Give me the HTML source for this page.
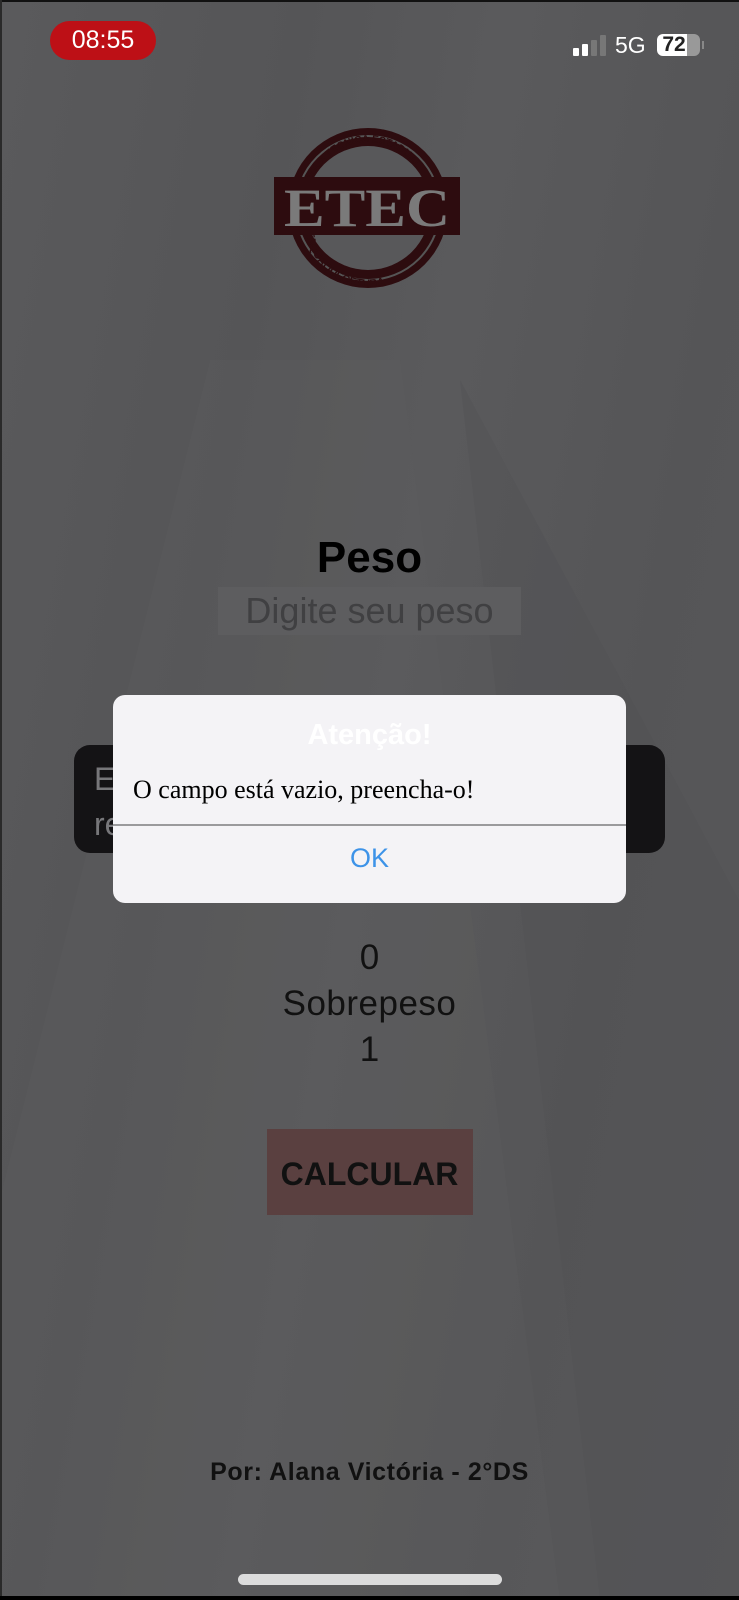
<!DOCTYPE html>
<html><head><meta charset="utf-8"><style>
*{margin:0;padding:0;box-sizing:border-box}
html,body{width:739px;height:1600px;overflow:hidden;background:#58585a;font-family:"Liberation Sans",sans-serif}
.abs{position:absolute}
.c{text-align:center;left:0;width:739px}
</style></head><body>
<div class="abs" style="left:0;top:0;width:739px;height:1600px;background:linear-gradient(100deg,#5a5a5c 0%,#555557 30%,#5a5a5c 50%,#555557 75%,#58585a 100%)"></div>
<svg class="abs" style="left:0;top:0" width="739" height="1600">
<polygon points="210,360 400,360 560,1600 0,1600 0,1200" fill="#5f5f61" opacity="0.25"/>
<polygon points="460,380 739,900 739,1600 600,1600" fill="#505052" opacity="0.3"/>
</svg>
<div class="abs" style="left:0;top:0;width:739px;height:2px;background:#111"></div>
<div class="abs" style="left:0;top:0;width:2px;height:1600px;background:#2a2a2a"></div>
<div class="abs" style="left:0;top:1596px;width:739px;height:4px;background:#000"></div>
<!-- status bar -->
<div class="abs" style="left:50px;top:21px;width:106px;height:39px;border-radius:20px;background:#bd1016;color:#fff;font-size:25px;line-height:39px;text-align:center">08:55</div>
<div class="abs" style="left:573px;top:48px;width:6px;height:8px;background:#fff;border-radius:1px"></div>
<div class="abs" style="left:582px;top:44px;width:6px;height:12px;background:#fff;border-radius:1px"></div>
<div class="abs" style="left:591px;top:40px;width:6px;height:16px;background:#777;border-radius:1px"></div>
<div class="abs" style="left:600px;top:35px;width:6px;height:21px;background:#777;border-radius:1px"></div>
<div class="abs" style="left:615px;top:33px;color:#fff;font-size:23px;line-height:24px">5G</div>
<div class="abs" style="left:657px;top:34px;width:43px;height:22px;border-radius:6px;background:linear-gradient(90deg,#fff 0 70%,#999 70%)"></div>
<div class="abs" style="left:702px;top:41px;width:2px;height:8px;background:#888"></div>
<div class="abs" style="left:657px;top:34px;width:34px;height:22px;color:#222;font-size:21px;font-weight:bold;line-height:22px;text-align:center">72</div>
<!-- logo -->
<svg class="abs" style="left:270px;top:125px" width="200" height="170" viewBox="0 0 200 170">
<defs><path id="ta" d="M40,75 A58,58 0 0 1 156,75"/><path id="tb" d="M36,100 A62,62 0 0 0 160,100"/></defs>
<circle cx="98" cy="83" r="80" fill="#2d0c0f"/>
<circle cx="98" cy="83" r="72" fill="none" stroke="#555" stroke-width="2"/>
<circle cx="98" cy="83" r="62" fill="#58585a"/>
<text font-family="Liberation Sans" font-size="10" font-weight="bold" fill="#2d0c0f"><textPath href="#ta" startOffset="2%">ESCOLA TECNICA ESTADUAL</textPath></text>
<text font-family="Liberation Sans" font-size="11" font-weight="bold" fill="#2d0c0f"><textPath href="#tb" startOffset="2%">ITAQUAQUECETUBA</textPath></text>
<rect x="4" y="52" width="186" height="58" fill="#2d0c0f"/>
<text x="97" y="101" text-anchor="middle" font-family="Liberation Serif" font-size="54" font-weight="bold" fill="#7a7a7a" textLength="166" lengthAdjust="spacingAndGlyphs">ETEC</text>
</svg>
<!-- form -->
<div class="abs c" style="top:532px;font-size:44px;font-weight:bold;color:#000;line-height:52px">Peso</div>
<div class="abs" style="left:218px;top:587px;width:303px;height:48px;background:#5d5d5f"></div>
<div class="abs c" style="top:589px;font-size:36px;color:#404042;line-height:44px">Digite seu peso</div>
<!-- toast -->
<div class="abs" style="left:74px;top:745px;width:591px;height:108px;border-radius:16px;background:#141315;color:#77777a;font-size:32px;line-height:45px;padding:12px 20px">Erro<br>re</div>
<div class="abs" style="left:600px;top:757px;color:#77777a;font-size:32px;line-height:45px">e</div>
<!-- results -->
<div class="abs c" style="top:936px;font-size:35px;color:#111;line-height:44px">0</div>
<div class="abs c" style="top:982px;font-size:35px;color:#111;line-height:44px;letter-spacing:0.5px">Sobrepeso</div>
<div class="abs c" style="top:1028px;font-size:35px;color:#111;line-height:44px">1</div>
<div class="abs" style="left:267px;top:1129px;width:206px;height:86px;background:#5a4040"></div>
<div class="abs c" style="top:1152px;font-size:32px;font-weight:bold;color:#111;line-height:44px">CALCULAR</div>
<div class="abs c" style="top:1457px;font-size:25px;font-weight:bold;color:#111;line-height:30px;letter-spacing:0.6px">Por: Alana Victória - 2°DS</div>
<div class="abs" style="left:238px;top:1574px;width:264px;height:11px;border-radius:6px;background:#dcdcdc"></div>
<!-- alert -->
<div class="abs" style="left:113px;top:695px;width:513px;height:208px;border-radius:12px;background:#f4f3f6;overflow:hidden">
<div style="position:absolute;left:0;top:22px;width:513px;text-align:center;color:#fff;font-size:29px;font-weight:bold;line-height:36px">Atenção!</div>
<div style="position:absolute;left:20px;top:79px;font-family:'Liberation Serif',serif;font-size:26px;color:#000;line-height:32px">O campo está vazio, preencha-o!</div>
<div style="position:absolute;left:0;top:129px;width:513px;height:2px;background:#9a9a9c"></div>
<div style="position:absolute;left:0;top:145px;width:513px;text-align:center;color:#3d93e8;font-size:27px;line-height:36px">OK</div>
</div>
</body></html>
